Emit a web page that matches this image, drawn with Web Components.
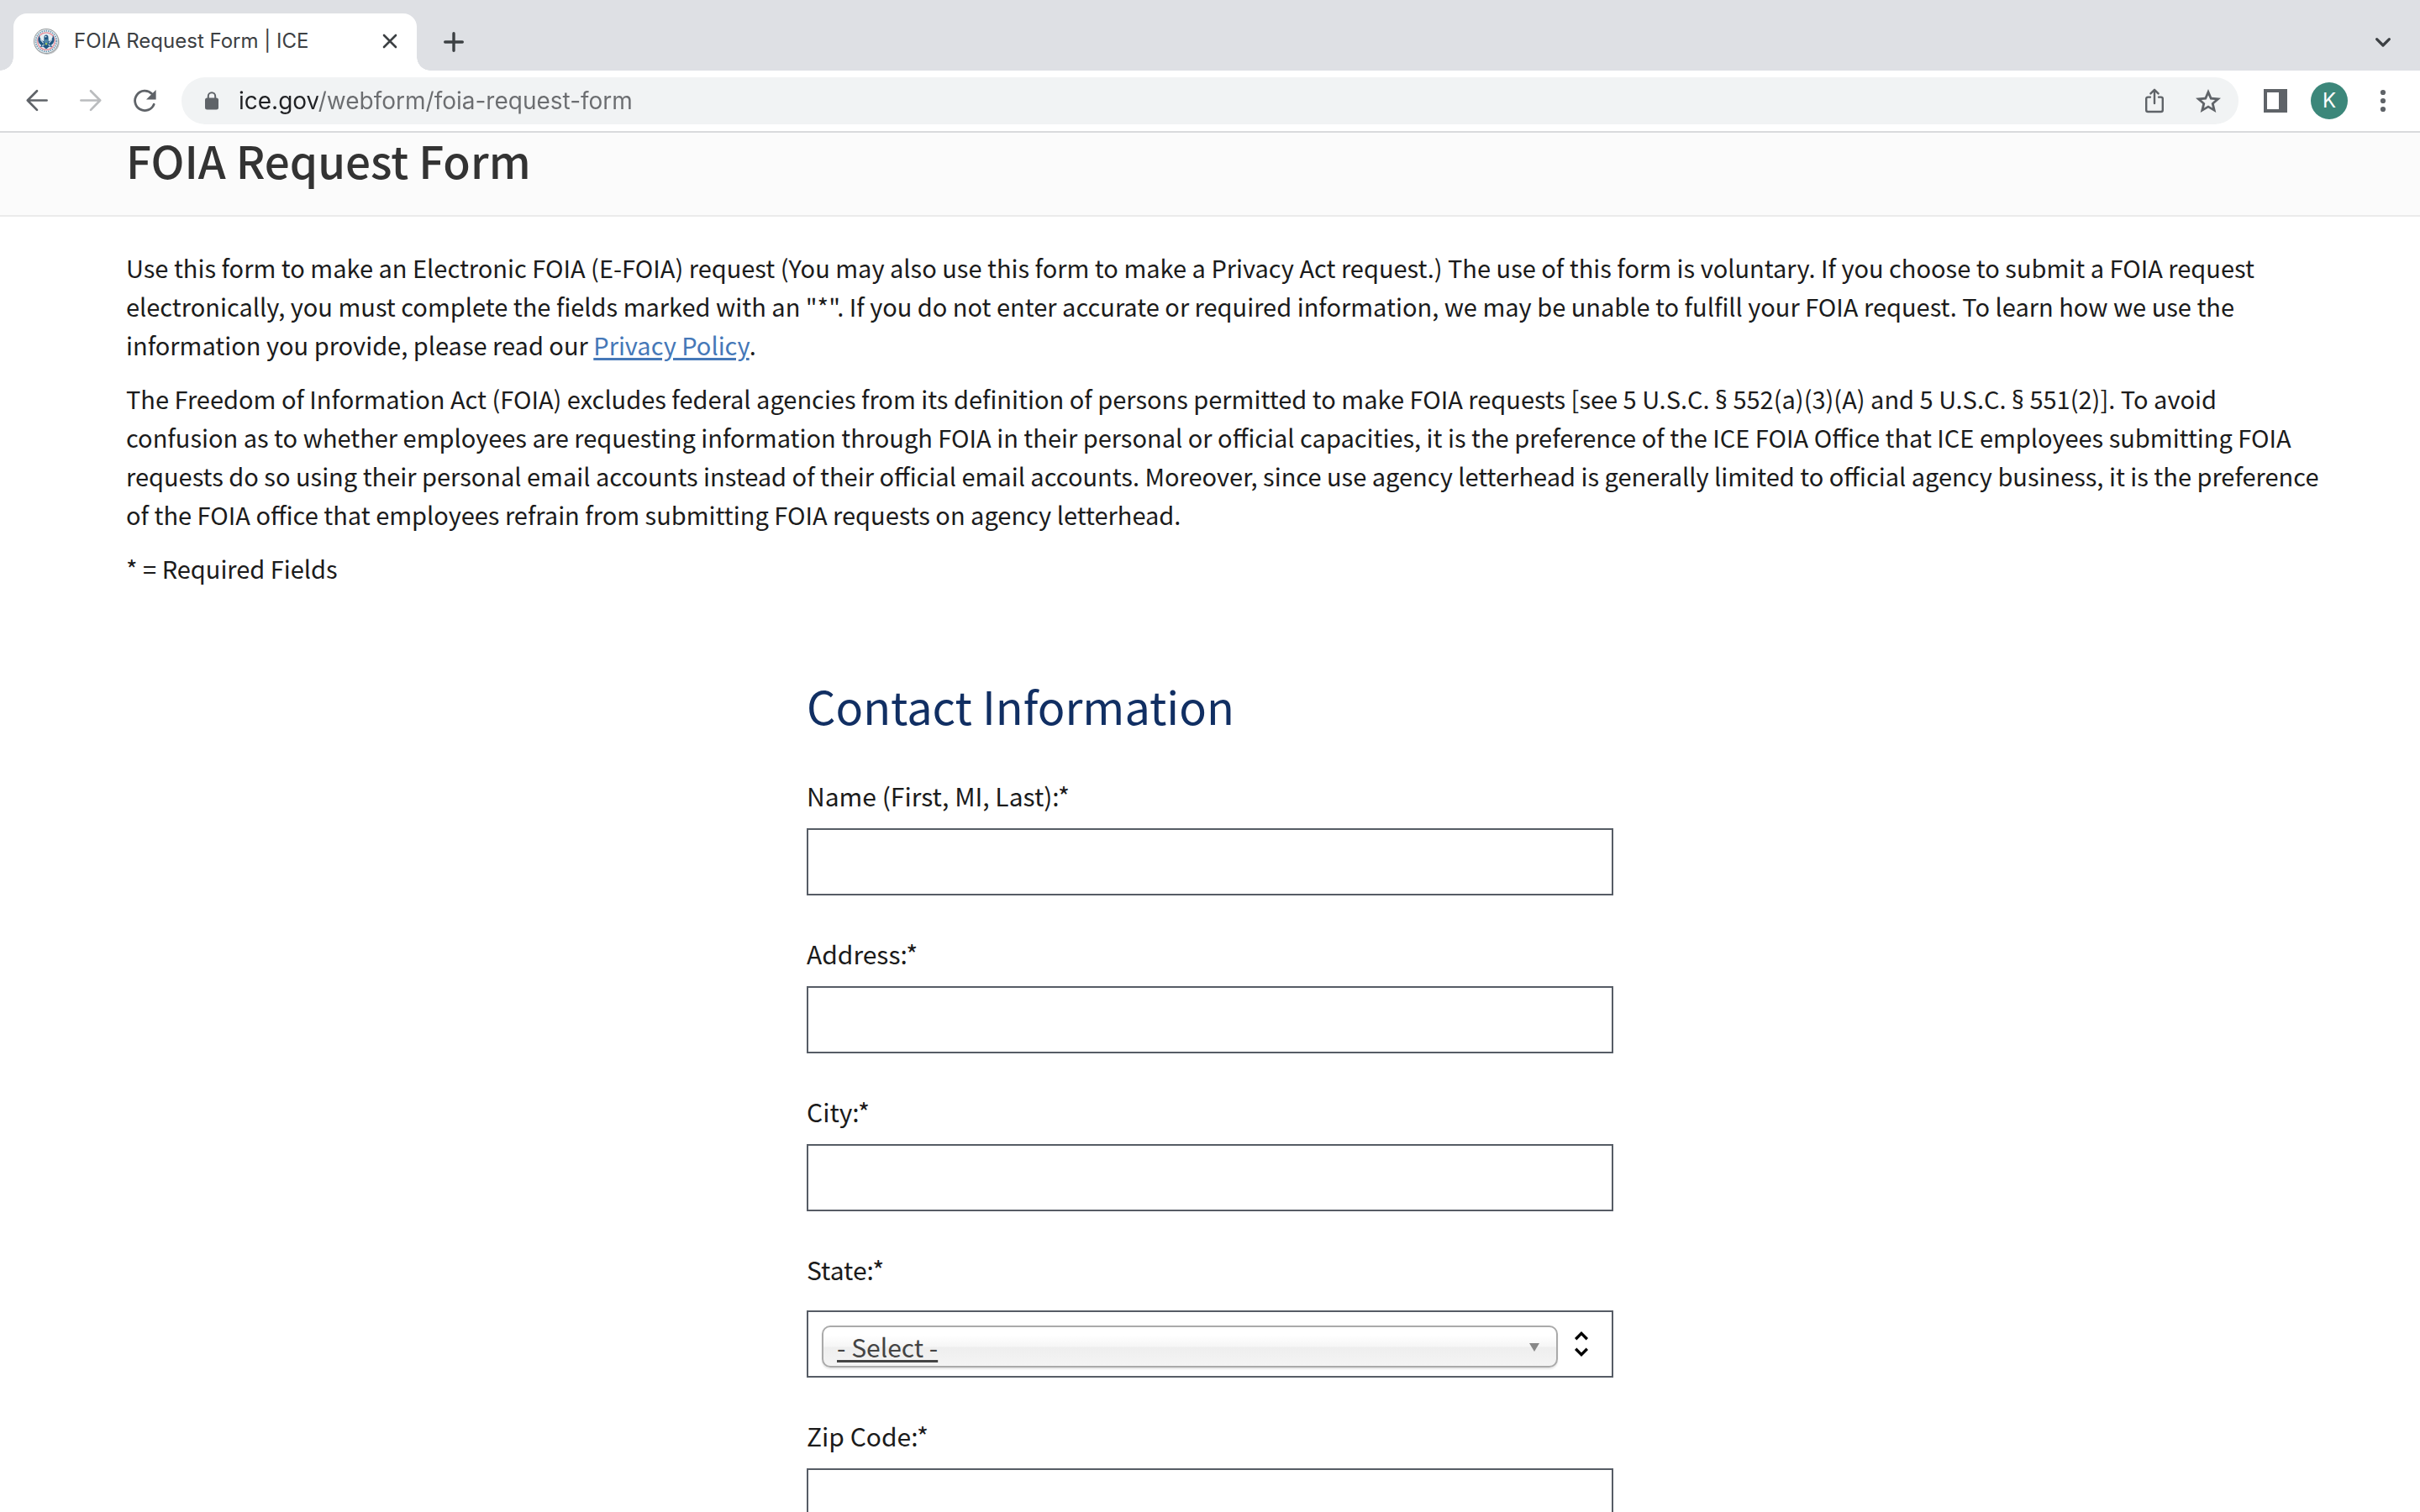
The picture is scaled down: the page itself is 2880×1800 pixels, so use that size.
<!DOCTYPE html>
<html lang="en">
<head>
<meta charset="utf-8">
<title>FOIA Request Form | ICE</title>
<style>
  :root {
    --ui-font: Inter, "Liberation Sans", sans-serif;
    --page-font: "Noto Sans CJK SC", "Noto Sans", sans-serif;
    --icon: #5f6368;
    --field-border: #565c65;
  }
  body { margin: 0; background: #fff; font-family: var(--page-font); font-size: 30px; line-height: 46px; color: #1b1b1b; }
  p { margin: 0; }
  .intro { display: flex; flex-direction: column; gap: 18px; padding: 37px 116px 0 150px; font-size: 29px; }
  .sign { font-family: "Noto Sans", sans-serif; line-height: 1; }
  a { color: #4578b8; text-decoration: underline; text-decoration-thickness: 3px; text-underline-offset: 3px; }
</style>
</head>
<body>
<browser-window>
  <browser-tab slot="tabs">FOIA Request Form | ICE</browser-tab>
  <address-bar slot="address" host="ice.gov" path="/webform/foia-request-form"></address-bar>
  <page-banner>FOIA Request Form</page-banner>
  <div class="intro">
    <p>Use this form to make an Electronic FOIA (E-FOIA) request (You may also use this form to make a Privacy Act request.) The use of this form is voluntary. If you choose to submit a FOIA request electronically, you must complete the fields marked with an "*". If you do not enter accurate or required information, we may be unable to fulfill your FOIA request. To learn how we use the information you provide, please read our <a href="#privacy">Privacy Policy</a>.</p>
    <p>The Freedom of Information Act (FOIA) excludes federal agencies from its definition of persons permitted to make FOIA requests [see 5 U.S.C. <span class="sign">§</span> 552(a)(3)(A) and 5 U.S.C. <span class="sign">§</span> 551(2)]. To avoid confusion as to whether employees are requesting information through FOIA in their personal or official capacities, it is the preference of the ICE FOIA Office that ICE employees submitting FOIA requests do so using their personal email accounts instead of their official email accounts. Moreover, since use agency letterhead is generally limited to official agency business, it is the preference of the FOIA office that employees refrain from submitting FOIA requests on agency letterhead.</p>
    <p>* = Required Fields</p>
  </div>
  <request-section heading="Contact Information">
    <text-field label="Name (First, MI, Last):*" name="name"></text-field>
    <text-field label="Address:*" name="address"></text-field>
    <text-field label="City:*" name="city"></text-field>
    <select-field label="State:*" name="state" placeholder="- Select -"></select-field>
    <text-field label="Zip Code:*" name="zip"></text-field>
  </request-section>
</browser-window>

<template id="browser-window">
  <style>
    :host { display: flex; flex-direction: column; height: 100vh; overflow: hidden; }
    button { all: unset; box-sizing: border-box; display: flex; align-items: center; justify-content: center; flex: none; cursor: pointer; }
    svg { display: block; overflow: visible; }
    .strip { display: flex; flex: none; align-items: flex-end; height: 84px; padding: 0 16px; background: #dee0e4; font-family: var(--ui-font); }
    .strip button { width: 56px; height: 60px; margin-bottom: 4px; }
    .new { margin-left: 16px; }
    .more { margin-left: auto; }
    .bar { display: flex; flex: none; align-items: center; height: 72px; padding: 0 16px; border-bottom: 2px solid #d9dadc; background: #fff; font-family: var(--ui-font); color: var(--icon); }
    .nav { display: flex; gap: 8px; margin-right: 16px; }
    .bar button { width: 56px; height: 56px; }
    .tools { display: flex; gap: 8px; margin-left: 16px; }
    .avatar span { display: grid; place-items: center; width: 44px; height: 44px; border-radius: 50%; background: #3c877a; color: #fff; font-size: 24px; line-height: 44px; }
    ::slotted(address-bar) { flex: 1; }
    .page { flex: 1; min-height: 0; overflow: hidden; }
  </style>
  <header>
    <div class="strip">
      <slot name="tabs"></slot>
      <button class="new" aria-label="New tab"><svg width="24" height="24" viewBox="0 0 24 24" fill="none" stroke="#3c4043" stroke-width="3.4" stroke-linecap="round"><path d="M12 1.7v20.6M1.7 12h20.6"/></svg></button>
      <button class="more" aria-label="Search tabs"><svg width="18" height="11" viewBox="0 0 18 11" fill="none" stroke="#3c4043" stroke-width="3.2" stroke-linecap="round"><path d="M1.6 1.6L9 9l7.4-7.4" stroke-linejoin="round"/></svg></button>
    </div>
    <div class="bar">
      <div class="nav">
        <button aria-label="Back"><svg width="26" height="26" viewBox="0 0 26 26" fill="none" stroke="currentColor" stroke-width="2.7" stroke-linecap="round" stroke-linejoin="round"><path d="M24.6 12.5H1.8M13 1.3L1.8 12.5 13 23.9"/></svg></button>
        <button aria-label="Forward"><svg width="26" height="26" viewBox="0 0 26 26" fill="none" stroke="#babcbe" stroke-width="2.7" stroke-linecap="round" stroke-linejoin="round"><path d="M1.4 12.5h22.8M13 1.3l11.2 11.2L13 23.9"/></svg></button>
        <button aria-label="Reload"><svg width="28" height="28" viewBox="0 0 28 28"><path d="M25.2 18.2A11.7 11.7 0 1 1 22.6 5.6" fill="none" stroke="currentColor" stroke-width="2.8" stroke-linecap="round"/><path d="M27.6 1v11.6H16z" fill="currentColor"/></svg></button>
      </div>
      <slot name="address"></slot>
      <div class="tools">
        <button aria-label="Side panel"><svg width="28" height="28" viewBox="0 0 28 28"><path fill="currentColor" fill-rule="evenodd" d="M0 0h28v28H0zM4 4v20h14V4z"/></svg></button>
        <button class="avatar" aria-label="Profile"><span>K</span></button>
        <button aria-label="Menu"><svg width="6" height="26" viewBox="0 0 6 26" fill="currentColor"><circle cx="3" cy="3" r="3.1"/><circle cx="3" cy="13" r="3.1"/><circle cx="3" cy="23" r="3.1"/></svg></button>
      </div>
    </div>
  </header>
  <main class="page"><slot></slot></main>
</template>

<template id="browser-tab">
  <style>
    :host { display: flex; align-items: center; box-sizing: border-box; width: 480px; height: 68px; padding: 0 20px 2px 24px; border-radius: 16px 16px 0 0; background: #fff; color: #3c4043; font-size: 24px; line-height: 32px; position: relative; }
    :host::before, :host::after { content: ""; position: absolute; bottom: 0; width: 16px; height: 16px; }
    :host::before { right: 100%; background: radial-gradient(circle at 0 0, #dee0e4 15.5px, #fff 16px); }
    :host::after { left: 100%; background: radial-gradient(circle at 100% 0, #dee0e4 15.5px, #fff 16px); }
    .seal { flex: none; margin-right: 16px; }
    .title { flex: 1; white-space: nowrap; overflow: hidden; }
    button { all: unset; display: grid; place-items: center; width: 24px; height: 32px; cursor: pointer; }
    svg { display: block; overflow: visible; }
  </style>
  <svg class="seal" width="32" height="32" viewBox="0 0 32 32">
    <circle cx="15.8" cy="17" r="15" fill="#c4c6c8"/>
    <circle cx="15" cy="16" r="15" fill="#959a9d"/>
    <circle cx="15" cy="16" r="14" fill="#eef2f4"/>
    <circle cx="15" cy="16" r="12.3" fill="none" stroke="#6d9ab5" stroke-width="1.8" stroke-dasharray="1.5 1.1"/>
    <circle cx="15" cy="16" r="10.2" fill="#e4edf2" stroke="#e68f9a" stroke-width="1.300"/>
    <path d="M6.800 9c.8 4.500 2.700 6.700 5.500 7.500l.2-5c-.2-1.500.8-3 2.500-3s2.700 1.500 2.500 3l.2 5c2.800-.8 4.700-3 5.500-7.500 2.500 5.200 1.400 9.400-2.400 11.700l1.400 2.300-3.600-.4L15 25.400l-3.600-2.800-3.600.4 1.400-2.300C5.400 18.400 4.300 14.200 6.800 9z" fill="#1f5683"/>
    <path d="M8 14l3.800 4.500M22 14l-3.800 4.500M10 21.500l2.600-1.200M20 21.500l-2.600-1.200" stroke="#dbe8ef" stroke-width="1.100"/>
    <path d="M12.800 14h4.400v4L15 20.300 12.800 18z" fill="#4f86a8"/>
    <circle cx="15" cy="19.300" r="1.200" fill="#a8c95b"/>
    <circle cx="14.500" cy="10.600" r=".9" fill="#f4f7f8"/>
  </svg>
  <span class="title"><slot></slot></span>
  <button aria-label="Close tab"><svg width="16" height="16" viewBox="0 0 16 16" stroke="#3c4043" stroke-width="2.600" stroke-linecap="round"><path d="M1 1l14 14M15 1L1 15"/></svg></button>
</template>

<template id="address-bar">
  <style>
    :host { display: flex; align-items: center; box-sizing: border-box; height: 56px; padding: 0 4px 0 28px; border-radius: 28px; background: #f1f3f4; color: var(--icon); }
    svg { display: block; overflow: visible; flex: none; }
    input { all: unset; flex: 1; min-width: 0; margin-left: 24px; height: 56px; font: 28px/56px var(--ui-font); color: #5f6368; -webkit-text-fill-color: transparent; background: linear-gradient(90deg, #202124 94px, #6b6d70 94px); -webkit-background-clip: text; background-clip: text; }
    button { all: unset; display: grid; place-items: center; flex: none; width: 64px; height: 56px; cursor: pointer; }
  </style>
  <svg width="16" height="22" viewBox="0 0 16 22"><rect y="7.500" width="16" height="14" rx="2.500" fill="currentColor"/><path d="M3.800 9V5.400a4.200 4.200 0 0 1 8.400 0V9" fill="none" stroke="currentColor" stroke-width="2"/></svg>
  <input type="text" aria-label="Address" spellcheck="false">
  <button aria-label="Share"><svg width="22" height="30" viewBox="0 0 22 30" fill="none" stroke="currentColor" stroke-width="2.400" stroke-linecap="round" stroke-linejoin="round"><path d="M6 10.600H3.200a2 2 0 0 0-2 2V26a2 2 0 0 0 2 2h15.600a2 2 0 0 0 2-2V12.600a2 2 0 0 0-2-2H16M11 18V2M6.400 6.400L11 1.800l4.600 4.600"/></svg></button>
  <button aria-label="Bookmark"><svg width="30" height="28" viewBox="0 0 30 28"><path fill="currentColor" fill-rule="evenodd" d="M15 0l4.100 9.800L30 10.700l-8.200 7.100L24.300 28 15 22.500 5.700 28l2.500-10.200L0 10.700l10.900-.9zM15 7.200l-2.300 5.300-5.800.5 4.400 3.900L10 22.500l5-3 5 3-1.300-5.600 4.400-3.900-5.800-.5z"/></svg></button>
</template>

<template id="page-banner">
  <style>
    :host { display: block; padding: 0 150px 34px; border-bottom: 2px solid #ebebeb; background: #fbfbfb; }
    h1 { margin: 0; font-size: 53px; line-height: 64px; font-weight: 500; color: #333; }
  </style>
  <h1><slot></slot></h1>
</template>

<template id="request-section">
  <style>
    :host { display: block; }
    form { width: 33.3333%; margin: 109px auto 0; display: flex; flex-direction: column; gap: 46px; }
    h2 { margin: 0 0 6px; font-size: 54px; line-height: 64px; font-weight: 400; color: #112f63; }
  </style>
  <form><h2></h2><slot></slot></form>
</template>

<template id="text-field">
  <style>
    :host { display: flex; flex-direction: column; gap: 16px; }
    input { box-sizing: border-box; width: 100%; height: 80px; margin: 0; padding: 0 16px; border: 2px solid var(--field-border); border-radius: 0; background: #fff; font: inherit; color: inherit; outline: none; }
  </style>
  <label for="control"></label>
  <input id="control" type="text">
</template>

<template id="select-field">
  <style>
    :host { display: flex; flex-direction: column; gap: 26px; }
    .box { display: flex; align-items: center; box-sizing: border-box; height: 80px; padding: 6px 28px 0 16px; border: 2px solid var(--field-border); gap: 20px; }
    .combo { position: relative; flex: 1; display: flex; }
    select { appearance: none; box-sizing: border-box; width: 100%; height: 50px; margin: 0; padding: 0 48px 0 16px; border: 2px solid #aaa; border-radius: 10px; background: linear-gradient(#fff 20%, #f6f6f6 50%, #eee 52%, #f4f4f4 100%); box-shadow: 0 2px 2px rgba(0,0,0,.1); font: inherit; line-height: 46px; color: #444; outline: none; text-decoration: underline; text-decoration-thickness: 3px; text-underline-offset: 3px; }
    .drop { position: absolute; right: 22px; top: 21px; pointer-events: none; }
    svg { display: block; flex: none; overflow: visible; }
    .sort { margin-bottom: 6px; }
  </style>
  <label for="control"></label>
  <div class="box">
    <div class="combo">
      <select id="control"></select>
      <svg class="drop" width="12" height="10" viewBox="0 0 12 10"><path d="M0 0h12L6 10z" fill="#888"/></svg>
    </div>
    <svg class="sort" width="16" height="30" viewBox="0 0 16 30" fill="none" stroke="#000" stroke-width="3.400"><path d="M1.200 9.200L8 2.400l6.800 6.800M1.200 20.800L8 27.600l6.800-6.800"/></svg>
  </div>
</template>

<script>
  class TemplateElement extends HTMLElement {
    constructor() {
      super();
      this.attachShadow({ mode: "open" }).append(document.getElementById(this.localName).content.cloneNode(true));
    }
    find(selector) { return this.shadowRoot.querySelector(selector); }
  }

  class BrowserWindow extends TemplateElement {}
  class BrowserTab extends TemplateElement {}
  class PageBanner extends TemplateElement {}

  class AddressBar extends TemplateElement {
    connectedCallback() {
      this.find("input").value = this.getAttribute("host") + this.getAttribute("path");
    }
  }

  class RequestSection extends TemplateElement {
    connectedCallback() { this.find("h2").textContent = this.getAttribute("heading"); }
  }

  class TextField extends TemplateElement {
    connectedCallback() {
      this.find("label").textContent = this.getAttribute("label");
      this.find("input").name = this.getAttribute("name");
    }
  }

  class SelectField extends TemplateElement {
    connectedCallback() {
      this.find("label").textContent = this.getAttribute("label");
      const select = this.find("select");
      select.name = this.getAttribute("name");
      select.replaceChildren(new Option(this.getAttribute("placeholder"), ""));
    }
  }

  customElements.define("browser-window", BrowserWindow);
  customElements.define("browser-tab", BrowserTab);
  customElements.define("address-bar", AddressBar);
  customElements.define("page-banner", PageBanner);
  customElements.define("request-section", RequestSection);
  customElements.define("text-field", TextField);
  customElements.define("select-field", SelectField);
</script>
</body>
</html>
